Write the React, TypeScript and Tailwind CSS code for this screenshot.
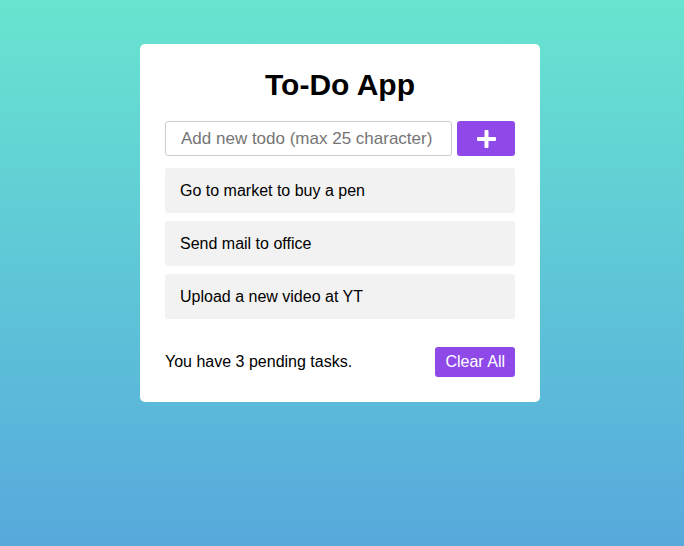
import React from "react";

export default function App() {
  const todos = ["Go to market to buy a pen", "Send mail to office", "Upload a new video at YT"];
  return (
    <div
      className="w-full h-[546px] bg-gradient-to-b from-[#68e4cf] to-[#57a9dc] pt-[44px] pr-1 flex justify-center items-start"
      style={{ fontFamily: '"Liberation Sans", Arial, sans-serif' }}
    >
      <div className="w-[400px] bg-white rounded-[5px] p-[25px]">
        <h1 className="text-[30px] leading-[32px] font-bold text-center text-black">To-Do App</h1>
        <div className="mt-5 flex h-[35px]">
          <input
            className="w-[287px] h-full border border-[#ccc] rounded-[3px] pl-[15px] text-[17px] outline-none placeholder:text-[#757575]"
            placeholder="Add new todo (max 25 character)"
          />
          <button className="ml-[5px] flex-1 h-full bg-[#8e49e8] rounded-[3px] flex items-center justify-center">
            <svg width="19" height="18" viewBox="0 0 19 18" fill="white">
              <rect x="7.5" y="0" width="4" height="18" rx="1" />
              <rect x="0" y="7" width="19" height="4" rx="1" />
            </svg>
          </button>
        </div>
        <ul className="mt-3">
          {todos.map((t) => (
            <li key={t} className="h-[45px] leading-[45px] mb-2 bg-[#f2f2f2] rounded-[3px] px-[15px] text-[16px] text-black">
              {t}
            </li>
          ))}
        </ul>
        <div className="mt-7 flex items-center justify-between">
          <span className="text-[16px] text-black">You have 3 pending tasks.</span>
          <button className="h-[30px] px-[10px] bg-[#8e49e8] text-white text-[16px] rounded-[3px]">Clear All</button>
        </div>
      </div>
    </div>
  );
}
